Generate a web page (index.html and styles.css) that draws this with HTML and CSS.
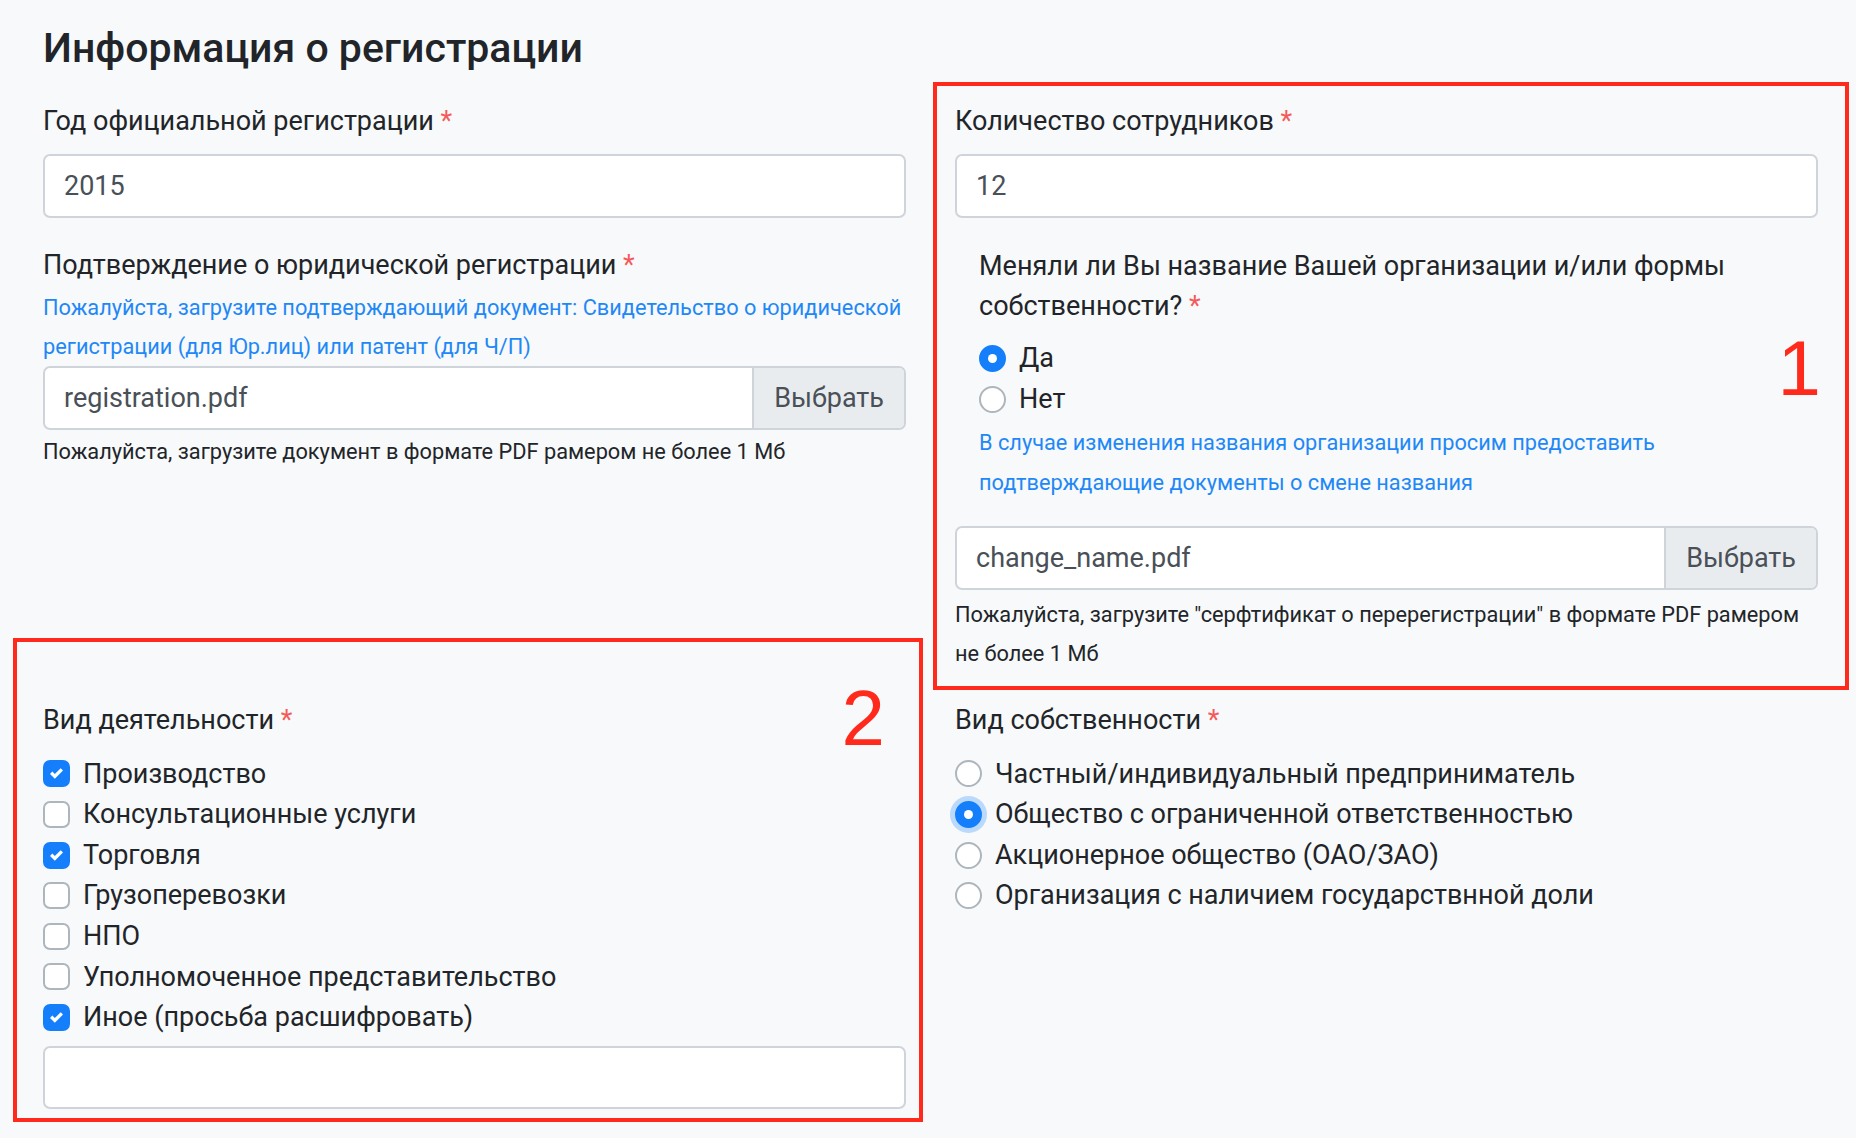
FILE: index.html
```html
<!DOCTYPE html>
<html lang="ru">
<head>
	<meta charset="UTF-8">
	<title>Информация о регистрации</title>
	<link rel="stylesheet" href="styles.css">
</head>
<body>
	<div class="page">
		<h4 class="title">Информация о регистрации</h4>

		<div class="grid">
			<div class="col">
				<div class="group">
					<label class="label">Год официальной регистрации <span class="req">*</span></label>
					<div class="input">2015</div>
				</div>
				<div class="group">
					<label class="label tight">Подтверждение о юридической регистрации <span class="req">*</span></label>
					<p class="hint">Пожалуйста, загрузите подтверждающий документ: Свидетельство о юридической регистрации (для Юр.лиц) или патент (для Ч/П)</p>
					<div class="file">
						<span class="file-name">registration.pdf</span>
						<span class="file-btn">Выбрать</span>
					</div>
					<p class="note note-left">Пожалуйста, загрузите документ в формате PDF рамером не более 1 Мб</p>
				</div>
			</div>

			<div class="col">
				<div class="group">
					<label class="label">Количество сотрудников <span class="req">*</span></label>
					<div class="input">12</div>
				</div>
				<div class="group">
					<div class="sub">
						<label class="label question">Меняли ли Вы название Вашей организации и/или формы собственности?&nbsp;<span class="req">*</span></label>
						<div class="opt"><span class="radio on"></span>Да</div>
						<div class="opt"><span class="radio"></span>Нет</div>
						<p class="hint hint-sub">В случае изменения названия организации просим предоставить подтверждающие документы о смене названия</p>
					</div>
					<div class="file file-sub">
						<span class="file-name">change_name.pdf</span>
						<span class="file-btn">Выбрать</span>
					</div>
					<p class="note">Пожалуйста, загрузите "серфтификат о перерегистрации" в формате PDF рамером не более 1 Мб</p>
				</div>
			</div>

			<div class="col">
				<label class="label list-label">Вид деятельности <span class="req">*</span></label>
				<div class="opt"><span class="check on"><svg viewBox="0 0 8 8"><path d="M6.564.75l-3.59 3.612-1.538-1.55L0 4.26 2.974 7.25 8 2.193z"/></svg></span>Производство</div>
				<div class="opt"><span class="check"></span>Консультационные услуги</div>
				<div class="opt"><span class="check on"><svg viewBox="0 0 8 8"><path d="M6.564.75l-3.59 3.612-1.538-1.55L0 4.26 2.974 7.25 8 2.193z"/></svg></span>Торговля</div>
				<div class="opt"><span class="check"></span>Грузоперевозки</div>
				<div class="opt"><span class="check"></span>НПО</div>
				<div class="opt"><span class="check"></span>Уполномоченное представительство</div>
				<div class="opt"><span class="check on"><svg viewBox="0 0 8 8"><path d="M6.564.75l-3.59 3.612-1.538-1.55L0 4.26 2.974 7.25 8 2.193z"/></svg></span>Иное (просьба расшифровать)</div>
				<div class="input other"></div>
			</div>

			<div class="col">
				<label class="label list-label">Вид собственности <span class="req">*</span></label>
				<div class="opt"><span class="radio"></span>Частный/индивидуальный предприниматель</div>
				<div class="opt"><span class="radio on focus"></span>Общество с ограниченной ответственностью</div>
				<div class="opt"><span class="radio"></span>Акционерное общество (ОАО/ЗАО)</div>
				<div class="opt"><span class="radio"></span>Организация с наличием государствнной доли</div>
			</div>
		</div>

		<!-- annotation frames -->
		<div class="mark mark-1"><span class="mark-num">1</span></div>
		<div class="mark mark-2"><span class="mark-num">2</span></div>
	</div>
</body>
</html>
```

FILE: styles.css
```css
*{
	box-sizing: border-box;
}
body{
	margin: 0;
	background: #f8f9fa;
	font-family: Roboto, "Liberation Sans", sans-serif;
	font-size: 27px;
	line-height: 1.5;
	color: #212529;
}
.page{
	position: relative;
	height: 1138px;
	padding: 23px 38px 0 43px;
}
.title{
	margin: 0 0 28px;
	font-size: 41px;
	font-weight: 500;
	line-height: 1.23;
}
.grid{
	display: grid;
	grid-template-columns: 1fr 1fr;
	column-gap: 49px;
	row-gap: 26.5px;
}
.group{
	margin-bottom: 27px;
}
.col .group:last-child{
	margin-bottom: 0;
}
.label{
	display: block;
	margin-bottom: 12px;
}
.label.tight{
	margin-bottom: 3px;
}
.label.question{
	line-height: 40px;
	margin-bottom: 12.5px;
}
.list-label{
	margin-bottom: 13.5px;
}
.req{
	color: #f55a5a;
}
.input{
	display: flex;
	align-items: center;
	height: 64px;
	padding: 0 19px;
	background: #fff;
	border: 2px solid #ced4da;
	border-radius: 7px;
	color: #495057;
}
.input.other{
	margin-top: 8px;
	height: 63px;
}
.hint{
	margin: 0;
	font-size: 21.75px;
	line-height: 39px;
	color: #1f88f7;
}
.hint-sub{
	margin-top: 3px;
	line-height: 40px;
}
.sub{
	padding: 1px 0 0 24px;
}
.file{
	display: flex;
	height: 64px;
	background: #fff;
	border: 2px solid #ced4da;
	border-radius: 7px;
	color: #495057;
	overflow: hidden;
}
.file-sub{
	margin-top: 23.5px;
}
.file-name{
	flex: 1;
	display: flex;
	align-items: center;
	padding: 0 19px;
}
.file-btn{
	display: flex;
	align-items: center;
	padding: 0 20px;
	background: #e9ecef;
	border-left: 2px solid #ced4da;
}
.note{
	margin: 5px 0 0;
	font-size: 21.75px;
	line-height: 39px;
}
.note.note-left{
	margin-top: 2px;
}
.opt{
	display: flex;
	align-items: center;
	height: 40.6px;
}
.check,
.radio{
	flex: none;
	position: relative;
	width: 27px;
	height: 27px;
	margin-right: 13px;
	background: #fff;
	border: 2px solid #adb5bd;
}
.check{
	border-radius: 7px;
}
.check svg{
	position: absolute;
	left: 5px;
	top: 5px;
	width: 13px;
	height: 13px;
	fill: #fff;
}
.radio{
	border-radius: 50%;
}
.check.on,
.radio.on{
	background: #157ffb;
	border-color: #157ffb;
}
.radio.on::after{
	content: "";
	position: absolute;
	left: 50%;
	top: 50%;
	width: 9px;
	height: 9px;
	margin: -4.5px 0 0 -4.5px;
	border-radius: 50%;
	background: #fff;
}
.radio.focus{
	box-shadow: 0 0 0 5px rgba(0, 123, 255, .25);
}
.mark{
	position: absolute;
	border: 4px solid #ff2a1c;
}
.mark-1{
	left: 933px;
	top: 82px;
	width: 916px;
	height: 608px;
}
.mark-2{
	left: 13px;
	top: 638px;
	width: 910px;
	height: 484px;
}
.mark-num{
	position: absolute;
	font-family: "Liberation Sans", Arial, sans-serif;
	font-size: 78px;
	line-height: 1;
	color: #ff2a1c;
}
.mark-1 .mark-num{
	right: 24px;
	top: 243px;
}
.mark-2 .mark-num{
	right: 34px;
	top: 37px;
}
```
